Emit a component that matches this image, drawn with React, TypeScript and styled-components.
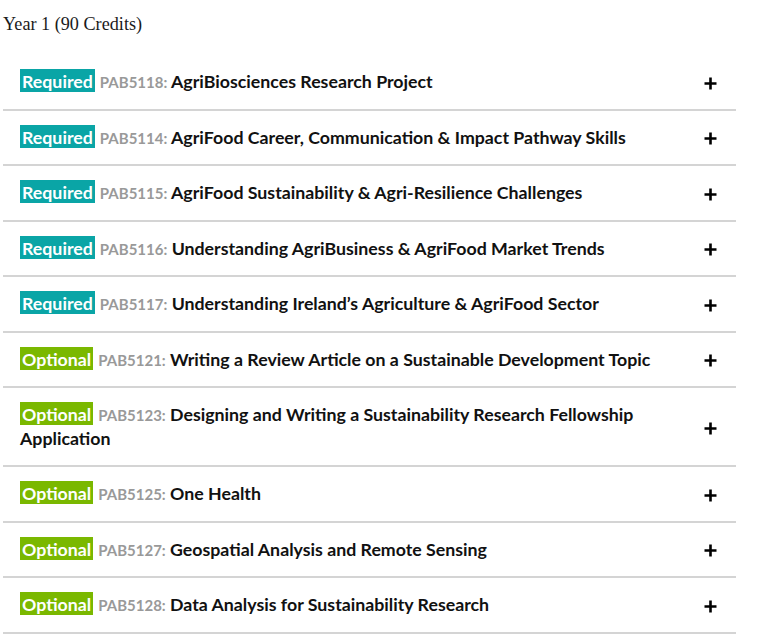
import React from "react";
import styled, { createGlobalStyle } from "styled-components";

const Global = createGlobalStyle`
  html, body { margin: 0; padding: 0; background: #fff; }
  body { font-family: Lato, "Open Sans", sans-serif; color: #111; }
`;

const Page = styled.div`
  padding: 0 26px 0 3px;
  width: 733px;
`;

const Heading = styled.h2`
  margin: 0;
  padding: 12px 0 19px;
  font-family: "Liberation Serif", "DejaVu Serif", serif;
  font-weight: 400;
  font-size: 18.2px;
  line-height: 24px;
  color: #1a1a1a;
`;

const List = styled.ul`
  list-style: none;
  margin: 0;
  padding: 0;
`;

const Row = styled.li`
  display: flex;
  align-items: center;
  gap: 16px;
  padding: 15px 19px 15px 17px;
  border-bottom: 2px solid #d4d4d4;
`;

const Title = styled.div`
  flex: 1;
  max-width: 670px;
  font-size: 17.75px;
  line-height: 23.5px;
  font-weight: 700;
  color: #111;
`;

const Badge = styled.span<{ $kind: "req" | "opt" }>`
  background: ${(p) => (p.$kind === "req" ? "#0aa5a6" : "#7ab800")};
  color: #fff;
  padding: 1px 2px 0;
  margin-right: 5px;
  line-height: 1;
`;

const Code = styled.span`
  color: #999;
  font-size: 15px;
  font-weight: 700;
  line-height: 1;
`;

const Plus = styled.svg`
  flex: none;
  width: 13px;
  height: 13px;
  margin-top: 3px;
`;

const rows: { kind: "req" | "opt"; code: string; title: string }[] = [
  { kind: "req", code: "PAB5118", title: "AgriBiosciences Research Project" },
  { kind: "req", code: "PAB5114", title: "AgriFood Career, Communication & Impact Pathway Skills" },
  { kind: "req", code: "PAB5115", title: "AgriFood Sustainability & Agri-Resilience Challenges" },
  { kind: "req", code: "PAB5116", title: "Understanding AgriBusiness & AgriFood Market Trends" },
  { kind: "req", code: "PAB5117", title: "Understanding Ireland\u2019s Agriculture & AgriFood Sector" },
  { kind: "opt", code: "PAB5121", title: "Writing a Review Article on a Sustainable Development Topic" },
  { kind: "opt", code: "PAB5123", title: "Designing and Writing a Sustainability Research Fellowship Application" },
  { kind: "opt", code: "PAB5125", title: "One Health" },
  { kind: "opt", code: "PAB5127", title: "Geospatial Analysis and Remote Sensing" },
  { kind: "opt", code: "PAB5128", title: "Data Analysis for Sustainability Research" },
];

export default function App() {
  return (
    <Page>
      <Global />
      <Heading>Year 1 (90 Credits)</Heading>
      <List>
        {rows.map((r) => (
          <Row key={r.code}>
            <Title>
              <Badge $kind={r.kind}>{r.kind === "req" ? "Required" : "Optional"}</Badge>
              <Code>{r.code}:</Code> {r.title}
            </Title>
            <Plus viewBox="0 0 13 13">
              <path d="M6.5 0.5v12M0.5 6.5h12" stroke="#000" strokeWidth="2.6" fill="none" />
            </Plus>
          </Row>
        ))}
      </List>
    </Page>
  );
}
